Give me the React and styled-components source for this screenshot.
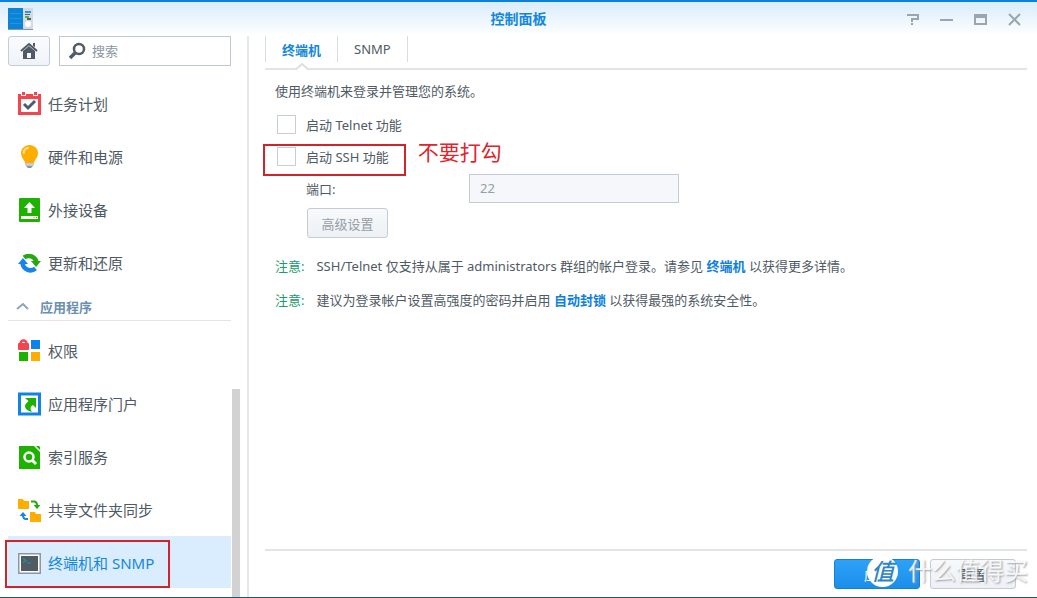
import React, { useState } from 'react';
import styled, { createGlobalStyle, css } from 'styled-components';

const GlobalStyle = createGlobalStyle`
  * {
    box-sizing: border-box;
  }
  body {
    margin: 0;
    background: #fff;
    color: #505a64;
    font-family: "Noto Sans", "Noto Sans CJK SC", sans-serif;
    font-size: 13px;
  }
  button, input {
    font: inherit;
  }
`;

const Window = styled.div`
  min-height: 100vh;
  display: flex;
  flex-direction: column;
  position: relative;
  border-top: 2px solid #0a82dc;
  border-bottom: 1px solid #1f5674;
  background: linear-gradient(#d9ecfb, #fff 34px);
`;

const TitleBar = styled.header`
  height: 34px;
  display: grid;
  grid-template-columns: 1fr auto 1fr;
  align-items: center;
  padding: 0 8px;
`;

const Title = styled.h1`
  margin: 0;
  font-size: 14px;
  line-height: 20px;
  font-weight: bold;
  color: #1387dc;
`;

const WindowButtons = styled.div`
  display: flex;
  justify-content: flex-end;
  gap: 18px;
  padding-right: 6px;
`;

const WindowButton = styled.button`
  width: 16px;
  height: 16px;
  padding: 0;
  border: 0;
  background: none;

  svg {
    display: block;
  }
`;

const Body = styled.div`
  flex: 1;
  display: flex;
`;

const Sidebar = styled.aside`
  width: 249px;
  flex-shrink: 0;
  display: flex;
  flex-direction: column;
  padding-left: 8px;
  border-right: 2px solid #e6e9ec;
`;

const SidebarTools = styled.div`
  display: flex;
  gap: 9px;
  height: 30px;
  margin: 0 16px 11px 0;
`;

const HomeButton = styled.button`
  width: 42px;
  flex-shrink: 0;
  display: flex;
  align-items: center;
  justify-content: center;
  padding: 0;
  border: 1px solid #c3ccd8;
  border-radius: 3px;
  background: linear-gradient(#fafbfd, #eff3f8);
`;

const SearchBox = styled.label`
  flex: 1;
  min-width: 0;
  display: flex;
  align-items: center;
  gap: 6px;
  padding-left: 8px;
  border: 1px solid #c0c8d3;
  background: #fff;

  svg {
    flex-shrink: 0;
  }
  input {
    flex: 1;
    min-width: 0;
    padding: 0;
    border: 0;
    outline: 0;
    background: none;
    color: #505a64;
  }
  input::placeholder {
    color: #8c969f;
    opacity: 1;
  }
`;

const SidebarScroll = styled.div`
  flex: 1;
  display: flex;
  gap: 1px;
  padding-right: 7px;
`;

const Nav = styled.nav`
  flex: 1;
  padding-bottom: 8px;
`;

const Track = styled.div`
  width: 8px;
  display: flex;
  align-items: flex-end;
`;

const Thumb = styled.div`
  width: 100%;
  height: 40%;
  background: #d2d2d2;
`;

const NavList = styled.ul`
  display: flex;
  flex-direction: column;
  gap: 1px;
  margin: 0;
  padding: 0;
  list-style: none;
`;

const NavRow = styled.li`
  position: relative;
`;

const NavLink = styled.a`
  height: 52px;
  display: flex;
  align-items: center;
  gap: 6px;
  padding-left: 10px;
  font-size: 15px;
  text-decoration: none;
  color: ${props => (props.$active ? '#1387dc' : '#505a64')};
  background: ${props => (props.$active ? '#d9edff' : 'none')};

  svg {
    margin-top: 2px;
  }
`;

const GroupHeader = styled.button`
  width: 100%;
  height: 33px;
  display: flex;
  align-items: center;
  gap: 11px;
  margin-bottom: 3px;
  padding: 4px 0 0 8px;
  border: 0;
  border-bottom: 1px solid #e1e5e9;
  background: none;
  font-weight: bold;
  color: #6b8fb0;
`;

const Main = styled.main`
  flex: 1;
  min-width: 0;
  display: flex;
  flex-direction: column;
  padding: 0 10px 0 16px;
`;

const Tabs = styled.div`
  height: 34px;
  display: flex;
  align-items: flex-start;
  border-bottom: 2px solid #e2e4e6;
`;

const Tab = styled.button`
  position: relative;
  height: 26px;
  padding: 0 16px;
  border: 0;
  border-right: 1px solid #d8dde2;
  background: none;
  color: #505a64;
  ${props => props.$active && css`
    color: #1387dc;
    font-weight: bold;
  `}

  &:first-child {
    border-left: 1px solid #d8dde2;
  }
`;

const Notch = styled.svg`
  position: absolute;
  left: 50%;
  bottom: -8px;
  margin-left: -8px;
`;

const Panel = styled.section`
  flex: 1;
  padding: 4px 10px;
`;

const Intro = styled.p`
  margin: 0;
  line-height: 34px;
`;

const Field = styled.div`
  height: 32px;
  display: flex;
  align-items: center;
  padding-left: ${props => (props.$indent ? '31px' : '2px')};
`;

const CheckLabel = styled.label`
  position: relative;
  display: flex;
  align-items: center;
  gap: 10px;
`;

const Checkbox = styled.input`
  appearance: none;
  width: 19px;
  height: 19px;
  margin: 0;
  border: 1px solid #c6ced8;
  background: #fff;

  &:checked {
    background: #1387dc;
    box-shadow: inset 0 0 0 4px #fff;
  }
`;

const FieldLabel = styled.label`
  width: 163px;
`;

const TextInput = styled.input`
  width: 210px;
  height: 29px;
  padding: 0 10px;
  border: 1px solid #c3ccd6;
  background: #f5f7fa;
  color: #969ea6;
`;

const Actions = styled.div`
  padding: 4px 0 0 32px;
`;

const Button = styled.button`
  height: 30px;
  min-width: ${props => (props.$small ? '81px' : '86px')};
  padding: 0 12px;
  border: 1px solid ${props => (props.$primary ? '#1681d2' : '#c3ccd6')};
  border-radius: 3px;
  background: ${props => (props.$primary
    ? 'linear-gradient(#2ea1f8, #1b8eea)'
    : 'linear-gradient(#f7f9fb, #edf1f5)')};
  color: ${props => (props.$primary ? '#fff' : '#414b55')};

  &:disabled {
    color: #969ea6;
  }
`;

const Notes = styled.div`
  margin-top: 11px;
`;

const Note = styled.p`
  display: flex;
  gap: 12px;
  margin: 0;
  line-height: 34px;
`;

const NoteTag = styled.span`
  color: #1a9c6b;
`;

const NoteLink = styled.a`
  color: #0f7fe0;
  font-weight: bold;
  text-decoration: none;
`;

const Footer = styled.footer`
  height: 48px;
  display: flex;
  align-items: center;
  justify-content: flex-end;
  gap: 10px;
  padding-right: 11px;
  border-top: 2px solid #e2e4e6;
`;

// red marks drawn over the panel
const NavMark = styled.span`
  position: absolute;
  inset: 4px 61px 0 -3px;
  border: 2px solid #d2232d;
  pointer-events: none;
`;

const CheckMark = styled.span`
  position: absolute;
  inset: -3px -17px -10px -14px;
  border: 2px solid #d2232d;
  pointer-events: none;
`;

const MarkText = styled.span`
  position: absolute;
  left: 100%;
  top: 50%;
  margin: -19px 0 0 29px;
  font-size: 21px;
  line-height: 30px;
  color: #e0242c;
  white-space: nowrap;
`;

const Watermark = styled.div`
  position: absolute;
  right: 9px;
  bottom: 10px;
  display: flex;
  align-items: center;
  gap: 10px;
  font-size: 24px;
  line-height: 32px;
  color: rgba(255, 255, 255, 0.85);
  text-shadow: 1px 1px 2px #999ea3;
  pointer-events: none;
`;

const WatermarkLogo = styled.span`
  width: 31px;
  height: 31px;
  border-radius: 50%;
  background: #fff;
  color: #2f86c4;
  font-size: 23px;
  font-style: italic;
  font-weight: 500;
  line-height: 30px;
  text-align: center;
  text-shadow: none;
`;

const Icon = ({ children, size = 24 }) => (
  <svg width={size} height={size} viewBox="0 0 24 24" fill="none" aria-hidden="true">{children}</svg>
);

const TaskIcon = () => (
  <Icon>
    <path fill="#f4454e" d="M0 2h23v21H0z" />
    <path fill="#fff" d="M3 7h17v13H3zM3 0h5v4H3zM15 0h5v4h-5z" />
    <path fill="#f4454e" d="M4 0h3v3H4zM16 0h3v3h-3z" />
    <path stroke="#505a6e" strokeWidth="3" d="M6 12l4 4 7-7" />
  </Icon>
);

const BulbIcon = () => (
  <Icon>
    <path fill="#ffae00" d="M11.500 0C6.500 0 3 3.600 3 8.300c0 3.700 2.300 5.400 3.500 8 .4.900.5 1.700.8 1.700h8.400c.3 0 .4-.8.800-1.700 1.200-2.600 3.500-4.300 3.500-8C20 3.600 16.500 0 11.500 0z" />
    <path stroke="#ffe09a" strokeWidth="2" strokeLinecap="round" d="M5.800 8c0-2.600 1.600-4.500 4-5" />
    <path fill="#c3cbd3" d="M7 18h9v2l-1 1H8l-1-1z" />
    <path fill="#8a949e" d="M8 21h7l-2 2h-3z" />
  </Icon>
);

const DeviceIcon = () => (
  <Icon>
    <rect x="1" width="21" height="24" rx="1" fill="#1db100" />
    <path fill="#fff" d="M11.500 4l5.500 6h-3.500v5h-4v-5H6zM3 18h17v3H3z" />
    <path fill="#f4c93b" d="M15 19h2v1h-2z" />
    <path fill="#1db100" d="M18 19h1v1h-1z" />
  </Icon>
);

const UpdateIcon = () => (
  <Icon>
    <path stroke="#26a811" strokeWidth="4.500" d="M6 6.500A8 8 0 0 1 18.500 11" />
    <path fill="#26a811" d="M13 10h10l-5 6z" />
    <path stroke="#1684e8" strokeWidth="4.500" d="M17.500 17.500A8 8 0 0 1 4.500 12" />
    <path fill="#1684e8" d="M0 13h10L5 7z" />
  </Icon>
);

const PrivilegeIcon = () => (
  <Icon>
    <path stroke="#f4454e" strokeWidth="2.500" d="M2.500 6V4.500a3 3 0 0 1 6 0V6" />
    <rect y="4" width="11" height="7" rx="1" fill="#f4454e" />
    <path fill="#0b84ed" d="M13 1h9v9h-9z" />
    <path fill="#1db100" d="M1 13h9v9H1z" />
    <path fill="#ffae00" d="M13 13h9v9h-9z" />
  </Icon>
);

const PortalIcon = () => (
  <Icon>
    <path stroke="#1183e5" strokeWidth="3" d="M1.500 2h20v20h-20z" />
    <path fill="#1db100" d="M7 6h11v10l-3-3c-3 2-3 4-1 7-4-1-7-3-7-6 0-2 2-3 3.500-5z" />
  </Icon>
);

const IndexIcon = () => (
  <Icon>
    <path fill="#1db100" d="M1 1h15l6 6v17H1z" />
    <path fill="#1db100" d="M18 1h3l1 1v3z" />
    <circle cx="11" cy="12" r="4.500" stroke="#fff" strokeWidth="2.500" />
    <path stroke="#fff" strokeWidth="3" d="M14 15l4 4" />
  </Icon>
);

const SyncIcon = () => (
  <Icon>
    <path fill="#ffae00" d="M0 1h5l1 2h5v8H0zM12 14h5l1 2h5v8H12z" />
    <path stroke="#26a811" strokeWidth="2" d="M13 3.500h3q3 0 3 4" />
    <path fill="#26a811" d="M15.500 7h7L19 11z" />
    <path stroke="#1684e8" strokeWidth="2" d="M10 21H8q-3 0-3-4" />
    <path fill="#1684e8" d="M1.500 18h7L5 14z" />
  </Icon>
);

const TerminalIcon = () => (
  <Icon>
    <path fill="#8f979e" d="M0 2h23v21H0z" />
    <path fill="#fff" d="M1.500 3.500h20v18h-20z" />
    <path fill="#505b64" d="M3 5h17v15H3z" />
    <path stroke="#1a98a5" strokeWidth="1.200" d="M5 7.500l3 2-3 2M9 12h4" />
  </Icon>
);

const systemItems = [
  { name: '任务计划', icon: TaskIcon },
  { name: '硬件和电源', icon: BulbIcon },
  { name: '外接设备', icon: DeviceIcon },
  { name: '更新和还原', icon: UpdateIcon },
];

const appItems = [
  { name: '权限', icon: PrivilegeIcon },
  { name: '应用程序门户', icon: PortalIcon },
  { name: '索引服务', icon: IndexIcon },
  { name: '共享文件夹同步', icon: SyncIcon },
  { name: '终端机和 SNMP', icon: TerminalIcon, active: true },
];

const NavItems = ({ items }) => (
  <NavList>
    {items.map(({ name, icon: ItemIcon, active }) => (
      <NavRow key={name}>
        <NavLink href="#" $active={active}><ItemIcon />{name}</NavLink>
        {active && <NavMark />}
      </NavRow>
    ))}
  </NavList>
);

function App() {
  const [tab, setTab] = useState('terminal');
  const [telnet, setTelnet] = useState(false);
  const [ssh, setSsh] = useState(false);

  const notch = (
    <Notch width="16" height="8" viewBox="0 0 16 8" aria-hidden="true">
      <path fill="#fff" stroke="#dcdfe2" strokeWidth="2" d="M1 8l7-6 7 6" />
    </Notch>
  );

  return (
    <Window>
      <GlobalStyle />
      <TitleBar>
        <svg width="25" height="22" viewBox="0 0 25 22" aria-hidden="true">
          <path fill="#0b84d8" d="M0 0h15v21H0z" />
          <path stroke="#1f97e6" d="M2 5.500h11M2 10.500h11M2 15.500h11" />
          <path fill="#d3dae1" d="M15 0h10v21H15z" />
          <path fill="#2c9bd8" d="M17 3h6v2h-6z" />
          <path fill="#4f6271" d="M17 6h5v1h-5zM19 10h4v2h-4z" />
          <path fill="#5caf4a" d="M17 8h4v2h-4z" />
          <circle cx="20" cy="16" r="3" fill="#fff" />
          <path fill="#8a97a2" d="M0 21h25v1H0z" />
        </svg>
        <Title>控制面板</Title>
        <WindowButtons>
          <WindowButton aria-label="帮助">
            <svg width="16" height="16" fill="none" stroke="#9ba5ad" strokeWidth="2">
              <path d="M2 4h11v4H7v3M7 12v2" />
            </svg>
          </WindowButton>
          <WindowButton aria-label="最小化">
            <svg width="16" height="16"><path fill="#9ba5ad" d="M1 8h13v2H1z" /></svg>
          </WindowButton>
          <WindowButton aria-label="最大化">
            <svg width="16" height="16">
              <path fill="#9ba5ad" fillRule="evenodd" d="M1 3h13v11H1zM3 7v5h9V7z" />
            </svg>
          </WindowButton>
          <WindowButton aria-label="关闭">
            <svg width="16" height="16" stroke="#9ba5ad" strokeWidth="2">
              <path d="M2 3l11 11M13 3L2 14" />
            </svg>
          </WindowButton>
        </WindowButtons>
      </TitleBar>
      <Body>
        <Sidebar>
          <SidebarTools>
            <HomeButton aria-label="主页">
              <svg width="18" height="18" viewBox="0 0 18 18">
                <path fill="#505a64" d="M3 9l6-5 6 5v8H3z" />
                <path fill="none" stroke="#505a64" strokeWidth="2" d="M1 9l8-7 8 7" />
                <path fill="#505a64" d="M13 1h2v4l-2-1z" />
                <path fill="#f4f6fa" d="M7 11h4v5H7z" />
              </svg>
            </HomeButton>
            <SearchBox>
              <svg width="18" height="18" viewBox="0 0 18 18" fill="none" stroke="#505a64">
                <circle cx="11" cy="7" r="5" strokeWidth="2.500" />
                <path strokeWidth="3.500" d="M7 11l-5 5" />
              </svg>
              <input type="text" placeholder="搜索" aria-label="搜索" />
            </SearchBox>
          </SidebarTools>
          <SidebarScroll>
            <Nav>
              <NavItems items={systemItems} />
              <GroupHeader>
                <svg width="13" height="8" fill="none" stroke="#8ba5bd" strokeWidth="2">
                  <path d="M1 7l6-5 5 5" />
                </svg>
                应用程序
              </GroupHeader>
              <NavItems items={appItems} />
            </Nav>
            <Track><Thumb /></Track>
          </SidebarScroll>
        </Sidebar>
        <Main>
          <Tabs>
            <Tab $active={tab === 'terminal'} onClick={() => setTab('terminal')}>
              终端机{tab === 'terminal' && notch}
            </Tab>
            <Tab $active={tab === 'snmp'} onClick={() => setTab('snmp')}>
              SNMP{tab === 'snmp' && notch}
            </Tab>
          </Tabs>
          <Panel>
            <Intro>使用终端机来登录并管理您的系统。</Intro>
            <Field>
              <CheckLabel>
                <Checkbox type="checkbox" checked={telnet} onChange={e => setTelnet(e.target.checked)} />
                启动 Telnet 功能
              </CheckLabel>
            </Field>
            <Field>
              <CheckLabel>
                <Checkbox type="checkbox" checked={ssh} onChange={e => setSsh(e.target.checked)} />
                启动 SSH 功能
                <CheckMark />
                <MarkText>不要打勾</MarkText>
              </CheckLabel>
            </Field>
            <Field $indent>
              <FieldLabel htmlFor="port">端口:</FieldLabel>
              <TextInput id="port" type="text" defaultValue="22" disabled={!ssh} />
            </Field>
            <Actions>
              <Button $small disabled={!ssh}>高级设置</Button>
            </Actions>
            <Notes>
              <Note>
                <NoteTag>注意:</NoteTag>
                <span>
                  SSH/Telnet 仅支持从属于 administrators 群组的帐户登录。请参见 <NoteLink href="#">终端机</NoteLink> 以获得更多详情。
                </span>
              </Note>
              <Note>
                <NoteTag>注意:</NoteTag>
                <span>
                  建议为登录帐户设置高强度的密码并启用 <NoteLink href="#">自动封锁</NoteLink> 以获得最强的系统安全性。
                </span>
              </Note>
            </Notes>
          </Panel>
          <Footer>
            <Button $primary>应用</Button>
            <Button>重置</Button>
          </Footer>
        </Main>
      </Body>
      <Watermark>
        <WatermarkLogo>值</WatermarkLogo>
        什么值得买
      </Watermark>
    </Window>
  );
}

export default App;
